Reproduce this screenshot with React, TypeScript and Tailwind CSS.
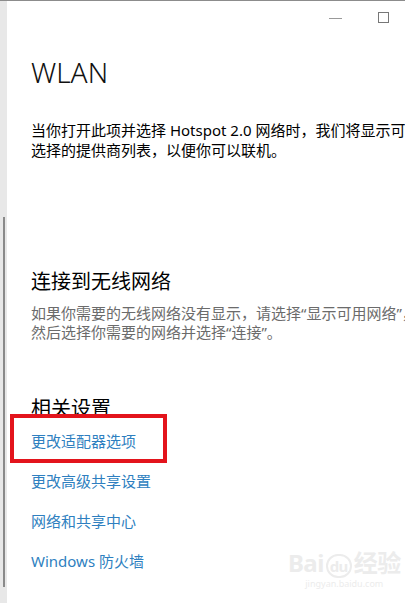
const cjk = { fontFamily: '"Noto Sans", "Noto Sans CJK SC", sans-serif' };

const links = ["更改适配器选项", "更改高级共享设置", "网络和共享中心", "Windows 防火墙"];

export default function App() {
  return (
    <div
      className="relative flex w-[405px] h-[603px] overflow-hidden bg-white border-t border-[#8c8c8c]"
      style={cjk}
    >
      {/* left scroll strip */}
      <div className="w-[7px] shrink-0 bg-[#e8e8e8] pt-[216px]">
        <div className="ml-[3px] w-[2px] h-[370px] bg-[#8a8a8a]" />
      </div>

      <div className="flex-1 min-w-0 pl-[24px] whitespace-nowrap">
        {/* window controls */}
        <div className="flex h-[53px] items-start justify-end pr-[16px] pt-[11px] gap-[36px]">
          <div className="mt-[6px] w-[13px] h-px bg-[#999]" />
          <div className="w-[11px] h-[11px] border border-[#777]" />
        </div>

        <h1 className="text-[28px] leading-[36px] font-light text-[#111]">WLAN</h1>

        <p className="mt-[30px] text-[15px] leading-[20px] text-black">
          当你打开此项并选择 Hotspot 2.0 网络时，我们将显示可供你
          <br />
          选择的提供商列表，以便你可以联机。
        </p>

        <h2 className="mt-[108px] text-[20px] leading-[28px] text-black">连接到无线网络</h2>
        <p className="mt-[8px] text-[15px] leading-[19px] text-[#6b6b6b]">
          如果你需要的无线网络没有显示，请选择“显示可用网络”，
          <br />
          然后选择你需要的网络并选择“连接”。
        </p>

        <h2 className="mt-[53px] text-[20px] leading-[28px] text-black">相关设置</h2>
        <div className="mt-[8px] flex flex-col gap-[20px]">
          {links.map((l) => (
            <div key={l} className="text-[15px] leading-[20px] text-[#2e7fc0]">
              {l}
            </div>
          ))}
        </div>
      </div>

      {/* annotation box */}
      <div className="absolute left-[10px] top-[413px] w-[157px] h-[49px] border-4 border-[#e3141c]" />

      {/* watermark */}
      <div className="absolute left-[288px] top-[550px] flex flex-col items-center text-[#ececec] leading-none">
        <div className="text-[24px] font-bold tracking-tight">
          Bai<span className="mx-[2px] rounded-full border-2 border-[#ececec] px-[2px] text-[15px]">du</span>经验
        </div>
        <div className="mt-[4px] text-[9px]">jingyan.baidu.com</div>
      </div>
    </div>
  );
}
